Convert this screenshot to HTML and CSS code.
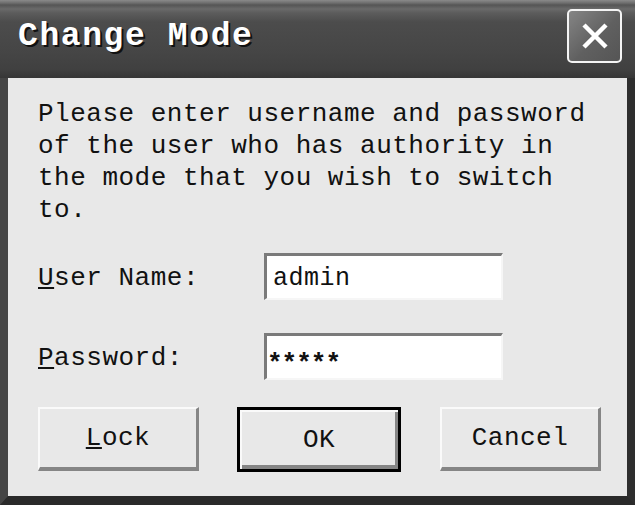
FILE: index.html
```html
<!DOCTYPE html>
<html lang="en">
<head>
    <meta charset="UTF-8">
    <title>Change Mode</title>
    <link rel="stylesheet" href="styles.css">
</head>
<body>
    <div class="window">
        <div class="title-bar">
            <span class="title">Change Mode</span>
            <button class="close-btn" aria-label="Close">
                <svg width="30" height="30" viewBox="0 0 30 30">
                    <path d="M4 4 L26 26 M26 4 L4 26" stroke="#fff" stroke-width="4.5" fill="none"/>
                </svg>
            </button>
        </div>

        <div class="content">
            <p class="message">Please enter username and password<br>of the user who has authority in<br>the mode that you wish to switch<br>to.</p>

            <div class="form">
                <div class="row">
                    <label class="label" for="user"><u>U</u>ser Name:</label>
                    <div class="field" id="user">admin</div>
                </div>
                <div class="row">
                    <label class="label" for="pass"><u>P</u>assword:</label>
                    <div class="field field-pass" id="pass">*****</div>
                </div>
            </div>

            <div class="buttons">
                <button class="btn"><u>L</u>ock</button>
                <button class="btn btn-default">OK</button>
                <button class="btn">Cancel</button>
            </div>
        </div>
    </div>
</body>
</html>
```

FILE: styles.css
```css
/* base */
* {
    box-sizing: border-box;
    margin: 0;
    padding: 0;
}

body {
    width: 635px;
    height: 505px;
    background-color: #3a3a3a;
    font-family: 'Liberation Mono', 'DejaVu Sans Mono', monospace;
    color: #111;
    overflow: hidden;
}

.window {
    width: 635px;
    height: 505px;
    display: flex;
    flex-direction: column;
    background-color: #474747;
    border-left: 8px solid #454545;
    border-right: 8px solid #2e2e2e;
    border-bottom: 9px solid #2a2a2a;
}

/* title bar */
.title-bar {
    height: 78px;
    margin-left: -8px;
    margin-right: -8px;
    padding: 0 13px 0 18px;
    display: flex;
    align-items: center;
    justify-content: space-between;
    background: linear-gradient(to bottom,
        #8a8a8a 0px, #6e6e6e 3px, #555 5px, #6a6a6a 9px, #5c5c5c 13px,
        #4c4c4c 22px, #464646 50px, #404040 70px, #363636 78px);
}
.title {
    color: #fff;
    font-weight: bold;
    font-size: 33px;
    letter-spacing: 1.6px;
    text-shadow: 2px 2px 0 #111;
    margin-top: -6px;
}
.close-btn {
    width: 55px;
    height: 54px;
    margin-top: -6px;
    border: 2px solid #f4f4f4;
    border-radius: 5px;
    background: linear-gradient(135deg, #858585, #606060 55%, #555);
    display: flex;
    align-items: center;
    justify-content: center;
}

/* dialog body */
.content {
    flex: 1;
    background-color: #e8e8e8;
    padding: 20px 0 0 30px;
    font-size: 26px;
    letter-spacing: 0.5px;
}
.message {
    line-height: 32px;
}
.form {
    margin-top: 27px;
    display: flex;
    flex-direction: column;
    gap: 33px;
}
.row {
    display: flex;
    align-items: center;
}
.label {
    width: 226px;
    padding-top: 2px;
}
.field {
    width: 239px;
    height: 47px;
    background-color: #fff;
    border-top: 3px solid #7a7a7a;
    border-left: 3px solid #7a7a7a;
    border-right: 2px solid #f6f6f6;
    border-bottom: 2px solid #f6f6f6;
    padding: 4px 0 0 6px;
    line-height: 38px;
    font-size: 25px;
}
.field-pass {
    padding: 9px 0 0 0;
    font-size: 26px;
    letter-spacing: -1px;
    font-weight: bold;
}

/* buttons */
.buttons {
    margin-top: 27px;
    display: flex;
    align-items: flex-start;
    gap: 39px;
}
.btn {
    width: 161px;
    height: 64px;
    font-family: inherit;
    font-size: 26px;
    letter-spacing: 0.5px;
    color: #111;
    background-color: #e8e8e8;
    border-top: 2px solid #fafafa;
    border-left: 2px solid #fafafa;
    border-right: 3px solid #858585;
    border-bottom: 4px solid #858585;
}
.btn-default {
    width: 164px;
    height: 65px;
    margin-left: -1px;
    border: 3px solid #000;
    box-shadow: inset 2px 2px 0 #fafafa, inset -3px -4px 0 #858585;
}
```
